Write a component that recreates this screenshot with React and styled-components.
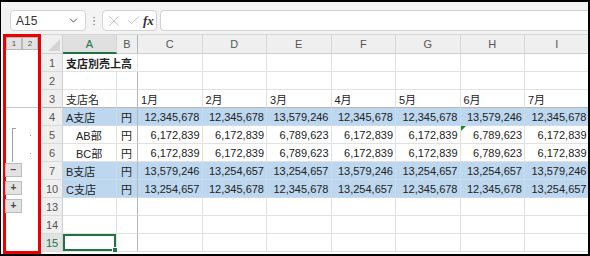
import React from 'react';
import styled, { createGlobalStyle } from 'styled-components';
import { ChevronDown, X, Check, EllipsisVertical } from 'lucide-react';

const GlobalStyle = createGlobalStyle`
  html, body { margin: 0; padding: 0; background: #fff; }
  body { font-family: "Liberation Sans", "Noto Sans CJK JP", sans-serif; }
  * { box-sizing: border-box; }
`;

const green = '#217346';

const months = ['1月', '2月', '3月', '4月', '5月', '6月', '7月'];
const cols = ['C', 'D', 'E', 'F', 'G', 'H', 'I'];

const big1 = '12,345,678';
const big2 = '13,579,246';
const big3 = '13,254,657';
const sm1 = '6,172,839';
const sm2 = '6,789,623';

const rows = [
  { n: 1, a: '支店別売上高', title: true },
  { n: 2 },
  { n: 3, a: '支店名', labels: months, split: true },
  { n: 4, a: 'A支店', unit: '円', hl: true, vals: [big1, big1, big2, big1, big1, big2, big1] },
  { n: 5, a: 'AB部', indent: true, unit: '円', vals: [sm1, sm1, sm2, sm1, sm1, sm2, sm1], outline: 'top' },
  { n: 6, a: 'BC部', indent: true, unit: '円', vals: [sm1, sm1, sm2, sm1, sm1, sm2, sm1], outline: 'line' },
  { n: 7, a: 'B支店', unit: '円', hl: true, vals: [big2, big3, big3, big2, big3, big3, big2], outline: '−' },
  { n: 10, a: 'C支店', unit: '円', hl: true, vals: [big3, big1, big1, big3, big1, big1, big3], outline: '+' },
  { n: 13, outline: '+' },
  { n: 14 },
  { n: 15, selected: true },
];

const Frame = styled.div`
  width: 590px;
  height: 256px;
  border: 2px solid #000;
  border-left-width: 1px;
  display: flex;
  flex-direction: column;
  overflow: hidden;
  background: #fff;
`;

const FormulaBar = styled.div`
  height: 32px;
  flex: none;
  background: #f3f3f3;
  display: flex;
  align-items: flex-start;
  padding: 8px 0 0 9px;
`;

const Box = styled.div`
  height: 21px;
  background: #fff;
  border: 1px solid #d2d2d2;
  border-radius: 4px;
  display: flex;
  align-items: center;
`;

const NameBox = styled(Box)`
  width: 76px;
  justify-content: space-between;
  padding: 0 5px 0 5px;
  font-size: 12px;
  color: #333;
`;

const Grip = styled.div`
  width: 16px;
  height: 21px;
  display: flex;
  align-items: center;
  justify-content: center;
  color: #9a9a9a;
`;

const ActionBox = styled(Box)`
  width: 55px;
  justify-content: space-around;
  padding: 0 1px;
`;

const Fx = styled.span`
  font-family: "Liberation Serif", serif;
  font-style: italic;
  font-weight: bold;
  font-size: 13px;
  color: #333;
`;

const Input = styled(Box)`
  flex: 1;
  margin-left: 3px;
  border-right: none;
  border-radius: 4px 0 0 4px;
`;

const Main = styled.div`
  flex: 1;
  display: flex;
  padding-left: 2px;
  min-height: 0;
`;

const Outline = styled.div`
  width: 38px;
  flex: none;
  border: 3px solid #ee0000;
  display: flex;
  flex-direction: column;
`;

const OutlineHead = styled.div`
  height: 17px;
  flex: none;
  display: flex;
`;

const LevelButton = styled.div`
  width: 16px;
  height: 13px;
  background: #e2e2e2;
  border: 1px solid #b9b9b9;
  font-size: 8px;
  color: #555;
  display: flex;
  align-items: center;
  justify-content: center;
`;

const OutlineRow = styled.div`
  height: 18px;
  flex: none;
  display: grid;
  grid-template-columns: 16px 16px;
  border-bottom: ${(p) => (p.$split ? '1px solid #c9c9c9' : 'none')};
`;

const Bracket = styled.div`
  width: 4px;
  margin-left: 6px;
  margin-top: ${(p) => (p.$top ? '2px' : '0')};
  border-left: 1px solid #a0a0a0;
  border-top: ${(p) => (p.$top ? '1px solid #a0a0a0' : 'none')};
`;

const Dot = styled.div`
  width: 1px;
  height: 1px;
  background: #a0a0a0;
  margin: auto;
`;

const ToggleButton = styled.div`
  width: 17px;
  height: 14px;
  margin: 1px 0 0 -1px;
  background: #e2e2e2;
  border: 1px solid #bcbcbc;
  font-size: 10px;
  font-weight: bold;
  line-height: 1;
  color: #444;
  display: flex;
  align-items: center;
  justify-content: center;
`;

const Sheet = styled.div`
  flex: 1;
  margin-left: 1px;
  border-top: 1px solid #d6d6d6;
  display: grid;
  grid-template-columns: 21px 54px 21px repeat(7, 64.5px);
  grid-template-rows: 19px;
  grid-auto-rows: 18px;
  align-content: start;
  overflow: hidden;
`;

const Corner = styled.div`
  background: #efefef;
  border-right: 1px solid #cfcfcf;
  border-bottom: 1px solid #cfcfcf;
  display: flex;
  align-items: flex-end;
  justify-content: flex-end;
  padding: 0 2px 2px 0;
`;

const ColHead = styled.div`
  background: ${(p) => (p.$selected ? '#e0e0e0' : '#efefef')};
  color: ${(p) => (p.$selected ? green : '#555')};
  font-size: 11px;
  display: flex;
  align-items: center;
  justify-content: center;
  border-right: 1px solid ${(p) => (p.$freeze ? '#b5b5b5' : '#d6d6d6')};
  border-bottom: ${(p) => (p.$selected ? `2px solid ${green}` : '1px solid #cfcfcf')};
`;

const RowHead = styled.div`
  background: ${(p) => (p.$selected ? '#e2e2e2' : '#efefef')};
  color: ${(p) => (p.$selected ? green : '#555')};
  font-size: 11px;
  display: flex;
  align-items: center;
  justify-content: center;
  border-right: 1px solid #cfcfcf;
  border-bottom: 1px solid ${(p) => (p.$split ? '#b5b5b5' : '#dadada')};
`;

const Cell = styled.div`
  position: relative;
  grid-column: ${(p) => (p.$span ? `span ${p.$span}` : 'auto')};
  background: ${(p) => (p.$hl ? '#bdd7ee' : '#fff')};
  font-size: 11px;
  font-weight: ${(p) => (p.$bold ? 'bold' : 'normal')};
  color: #222;
  white-space: nowrap;
  display: flex;
  align-items: center;
  justify-content: ${(p) => (p.$right ? 'flex-end' : 'flex-start')};
  padding: ${(p) => (p.$right ? `0 ${p.$pad || 2}px 0 0` : `0 0 0 ${p.$indent ? 13 : 3}px`)};
  border-right: 1px solid ${(p) => (p.$freeze ? '#b5b5b5' : p.$hl ? '#c8dcef' : '#e1e1e1')};
  border-bottom: 1px solid ${(p) => (p.$split ? '#b5b5b5' : p.$hl ? '#c8dcef' : '#e1e1e1')};
  box-shadow: ${(p) => (p.$active ? `inset 0 0 0 2px ${green}` : 'none')};

  &::before {
    content: '';
    display: ${(p) => (p.$flag ? 'block' : 'none')};
    position: absolute;
    left: 0;
    top: 0;
    border-top: 5px solid #1f8a1f;
    border-right: 5px solid transparent;
  }

  &::after {
    content: '';
    display: ${(p) => (p.$active ? 'block' : 'none')};
    position: absolute;
    right: -2px;
    bottom: -2px;
    width: 4px;
    height: 4px;
    background: ${green};
    border: 1px solid #fff;
  }
`;

function OutlineMark({ kind }) {
  if (kind === 'top' || kind === 'line') {
    return (
      <>
        <Bracket $top={kind === 'top'} />
        <Dot />
      </>
    );
  }
  if (kind === '−' || kind === '+') {
    return (
      <>
        <ToggleButton>{kind}</ToggleButton>
        <div />
      </>
    );
  }
  return null;
}

function SheetRow({ row }) {
  const {
    n, a, title, labels, unit, vals, hl, indent, split, selected,
  } = row;
  const cells = [];
  if (title) {
    cells.push(<Cell key="a" $span={2} $bold $split={split}>{a}</Cell>);
  } else {
    cells.push(
      <Cell key="a" $hl={hl} $indent={indent} $split={split} $active={selected}>
        {a}
      </Cell>,
    );
    cells.push(
      <Cell key="b" $hl={hl} $right $pad={5} $freeze $split={split}>
        {unit}
      </Cell>,
    );
  }
  cols.forEach((c, i) => {
    if (vals) {
      cells.push(
        <Cell key={c} $hl={hl} $right $split={split} $flag={n === 5 && c === 'H'}>
          {vals[i]}
        </Cell>,
      );
    } else {
      cells.push(
        <Cell key={c} $split={split}>{labels ? labels[i] : ''}</Cell>,
      );
    }
  });
  return (
    <>
      <RowHead $selected={selected} $split={split}>{n}</RowHead>
      {cells}
    </>
  );
}

export default function App() {
  return (
    <>
      <GlobalStyle />
      <Frame>
        <FormulaBar>
          <NameBox>
            <span>A15</span>
            <ChevronDown size={13} color="#444" strokeWidth={1.6} />
          </NameBox>
          <Grip>
            <EllipsisVertical size={12} strokeWidth={2} />
          </Grip>
          <ActionBox>
            <X size={18} color="#b8b8b8" strokeWidth={1.1} />
            <Check size={15} color="#b8b8b8" strokeWidth={1.3} />
            <Fx>fx</Fx>
          </ActionBox>
          <Input />
        </FormulaBar>
        <Main>
          <Outline>
            <OutlineHead>
              <LevelButton>1</LevelButton>
              <LevelButton>2</LevelButton>
            </OutlineHead>
            {rows.map((r) => (
              <OutlineRow key={r.n} $split={r.split}>
                <OutlineMark kind={r.outline} />
              </OutlineRow>
            ))}
          </Outline>
          <Sheet>
            <Corner>
              <svg width="12" height="12" viewBox="0 0 12 12">
                <polygon points="12,0 12,12 0,12" fill="#d4d4d4" />
              </svg>
            </Corner>
            <ColHead $selected>A</ColHead>
            <ColHead $freeze>B</ColHead>
            {cols.map((c) => <ColHead key={c}>{c}</ColHead>)}
            {rows.map((r) => <SheetRow key={r.n} row={r} />)}
          </Sheet>
        </Main>
      </Frame>
    </>
  );
}
